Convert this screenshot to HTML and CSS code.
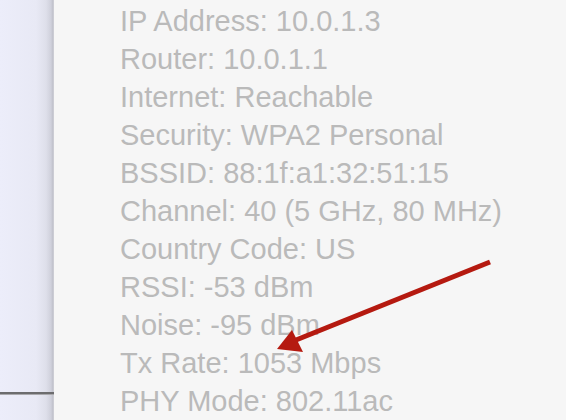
FILE: index.html
```html
<!DOCTYPE html>
<html>
<head>
<meta charset="utf-8">
<link rel="stylesheet" href="styles.css">
</head>
<body>
<div class="screen">
  <div class="sidebar">
    <div class="sidebar-top"></div>
    <div class="sidebar-divider"></div>
  </div>
  <div class="menu">
    <div class="item">IP Address: 10.0.1.3</div>
    <div class="item">Router: 10.0.1.1</div>
    <div class="item">Internet: Reachable</div>
    <div class="item">Security: WPA2 Personal</div>
    <div class="item">BSSID: 88:1f:a1:32:51:15</div>
    <div class="item">Channel: 40 (5 GHz, 80 MHz)</div>
    <div class="item">Country Code: US</div>
    <div class="item">RSSI: -53 dBm</div>
    <div class="item">Noise: -95 dBm</div>
    <div class="item">Tx Rate: 1053 Mbps</div>
    <div class="item">PHY Mode: 802.11ac</div>
  </div>
  <svg class="arrow" width="566" height="420" viewBox="0 0 566 420">
    <line x1="490" y1="262" x2="296" y2="340" stroke="#b51a10" stroke-width="5" stroke-linecap="butt"/>
    <polygon points="277,349 292,330 303,352" fill="#b51a10"/>
  </svg>
</div>
</body>
</html>
```
FILE: styles.css
```css
html, body {
  margin: 0;
  padding: 0;
  width: 566px;
  height: 420px;
  overflow: hidden;
  background: #f6f6f6;
}
.screen {
  position: relative;
  display: flex;
  width: 566px;
  height: 420px;
}
.sidebar {
  width: 54px;
  flex: none;
  display: flex;
  flex-direction: column;
  background: linear-gradient(to right, #ecedfa 0px, #e8e9f5 36px, #dedfea 46px, #cfd0db 51px, #bfc0ca 53px, #d8d8de 54px);
}
.sidebar-top {
  height: 392px;
  flex: none;
}
.sidebar-divider {
  height: 2px;
  background: #6c6c6e;
  border-bottom: 1px solid #a9a9ad;
}
.menu {
  flex: 1;
  padding: 2px 0 0 66px;
  font-family: "Liberation Sans", Arial, sans-serif;
  font-size: 29px;
  line-height: 38px;
  color: #bababa;
  white-space: nowrap;
}
.arrow {
  position: absolute;
  left: 0;
  top: 0;
}
```
